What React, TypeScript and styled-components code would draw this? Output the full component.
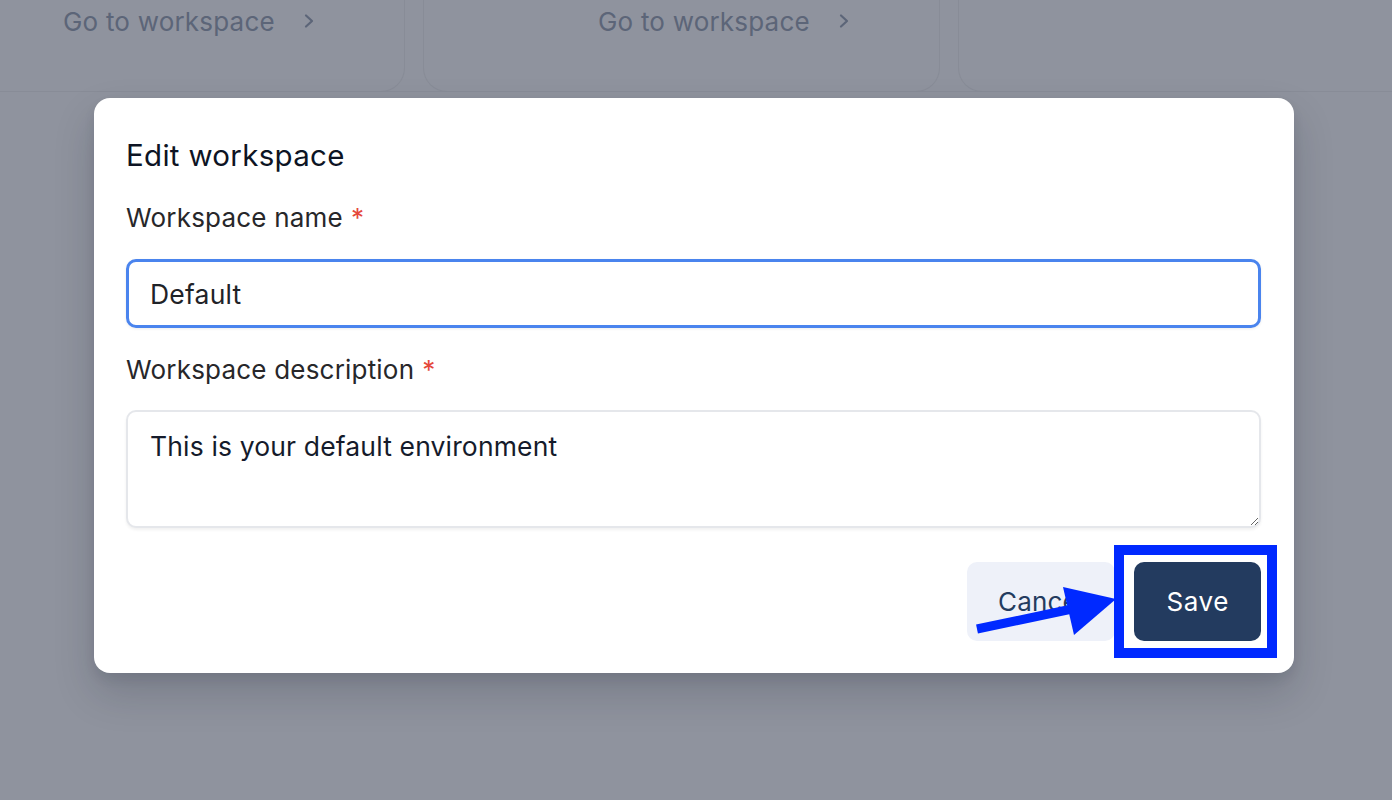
import React from "react";
import styled, { createGlobalStyle } from "styled-components";

const Global = createGlobalStyle`
  html, body { margin: 0; padding: 0; }
  body {
    width: 1392px;
    height: 800px;
    overflow: hidden;
    background: #8f939e;
    font-family: "Inter", "Open Sans", sans-serif;
  }
`;

const Page = styled.div`
  position: relative;
  width: 1392px;
  height: 800px;
  overflow: hidden;
  display: flex;
  flex-direction: column;
  background: #8f939e;
`;

const CardRow = styled.div`
  display: flex;
  gap: 18px;
  height: 92px;
  margin-left: -112px;
  border-bottom: 1px solid #898d98;
  box-sizing: border-box;
`;

const Card = styled.div<{ $w: number }>`
  flex: 0 0 ${(p) => p.$w}px;
  height: 92px;
  box-sizing: border-box;
  border: 1px solid #888c97;
  border-top: none;
  border-radius: 0 0 24px 24px;
  padding: 4px 0 0 174px;
  display: flex;
  align-items: flex-start;
`;

const CardLink = styled.div`
  display: flex;
  align-items: center;
  gap: 27px;
  height: 34px;
  font-size: 26px;
  color: #5c6578;
  letter-spacing: 0.2px;
`;

const ModalArea = styled.div`
  display: flex;
  justify-content: flex-start;
  padding: 6px 0 0 94px;
`;

const Modal = styled.div`
  width: 1200px;
  box-sizing: border-box;
  background: #ffffff;
  border-radius: 16px;
  padding: 39px 33px 32px 32px;
  display: flex;
  flex-direction: column;
  box-shadow: 0 20px 40px rgba(17, 24, 39, 0.18), 0 6px 12px rgba(17, 24, 39, 0.08);
`;

const Title = styled.h2`
  margin: 0;
  font-size: 29.5px;
  line-height: 36px;
  font-weight: 400;
  color: #0d1424;
  letter-spacing: 0.3px;
`;

const Label = styled.label<{ $mt: number }>`
  display: block;
  margin-top: ${(p) => p.$mt}px;
  font-size: 26px;
  line-height: 34px;
  font-weight: 400;
  color: #27272a;
  letter-spacing: 0.2px;
`;

const Star = styled.span`
  color: #e5483b;
  margin-left: 8px;
`;

const TextInput = styled.input`
  display: block;
  margin-top: 24px;
  width: 100%;
  height: 69px;
  box-sizing: border-box;
  border: 3px solid #4a84ee;
  border-radius: 10px;
  padding: 0 21px;
  font-family: inherit;
  font-size: 26.5px;
  letter-spacing: 0.2px;
  color: #1f2328;
  outline: none;
  box-shadow: 0 1px 3px rgba(0, 0, 0, 0.08);
`;

const TextArea = styled.textarea`
  display: block;
  margin-top: 23px;
  width: 100%;
  height: 118px;
  box-sizing: border-box;
  border: 2px solid #e5e7eb;
  border-radius: 10px;
  padding: 17px 22px;
  font-family: inherit;
  font-size: 26.5px;
  letter-spacing: 0.15px;
  line-height: 34px;
  color: #151b2b;
  outline: none;
  resize: vertical;
  box-shadow: 0 2px 3px rgba(0, 0, 0, 0.06);
`;

const Footer = styled.div`
  margin-top: 34px;
  display: flex;
  justify-content: flex-end;
  gap: 19px;
`;

const Button = styled.button<{ $primary?: boolean }>`
  position: relative;
  height: 79px;
  border: none;
  border-radius: 10px;
  padding: 0 ${(p) => (p.$primary ? 32 : 31)}px;
  font-family: inherit;
  font-size: 26px;
  font-weight: 400;
  letter-spacing: ${(p) => (p.$primary ? 0.6 : 0.2)}px;
  background: ${(p) => (p.$primary ? "#233b5f" : "#eef1f9")};
  color: ${(p) => (p.$primary ? "#ffffff" : "#233b5f")};
  cursor: pointer;
`;

const Highlight = styled.span`
  position: absolute;
  left: -20px;
  right: -16px;
  top: -17px;
  bottom: -17px;
  border: 10px solid #0029ff;
  pointer-events: none;
`;

const ArrowLayer = styled.svg`
  position: absolute;
  left: 0;
  top: 0;
  width: 1392px;
  height: 800px;
  pointer-events: none;
`;

const Chevron = () => (
  <svg width="14" height="16" viewBox="0 0 14 16" fill="none">
    <path d="M4 2.5l6 5.5-6 5.5" stroke="#5c6578" strokeWidth="2.2" strokeLinecap="round" strokeLinejoin="round" />
  </svg>
);

export default function App() {
  return (
    <Page>
      <Global />
      <CardRow>
        <Card $w={517}>
          <CardLink>
            Go to workspace <Chevron />
          </CardLink>
        </Card>
        <Card $w={517}>
          <CardLink>
            Go to workspace <Chevron />
          </CardLink>
        </Card>
        <Card $w={520} />
      </CardRow>
      <ModalArea>
        <Modal>
          <Title>Edit workspace</Title>
          <Label $mt={28}>
            Workspace name<Star>*</Star>
          </Label>
          <TextInput defaultValue="Default" />
          <Label $mt={25}>
            Workspace description<Star>*</Star>
          </Label>
          <TextArea defaultValue="This is your default environment" />
          <Footer>
            <Button>Cancel</Button>
            <Button $primary>
              Save
              <Highlight />
            </Button>
          </Footer>
        </Modal>
      </ModalArea>
      <ArrowLayer viewBox="0 0 1392 800">
        <path d="M977 629 L1072 609" stroke="#0029ff" strokeWidth="9" strokeLinecap="butt" />
        <polygon points="1063,587 1116,599 1074,635" fill="#0029ff" />
      </ArrowLayer>
    </Page>
  );
}
